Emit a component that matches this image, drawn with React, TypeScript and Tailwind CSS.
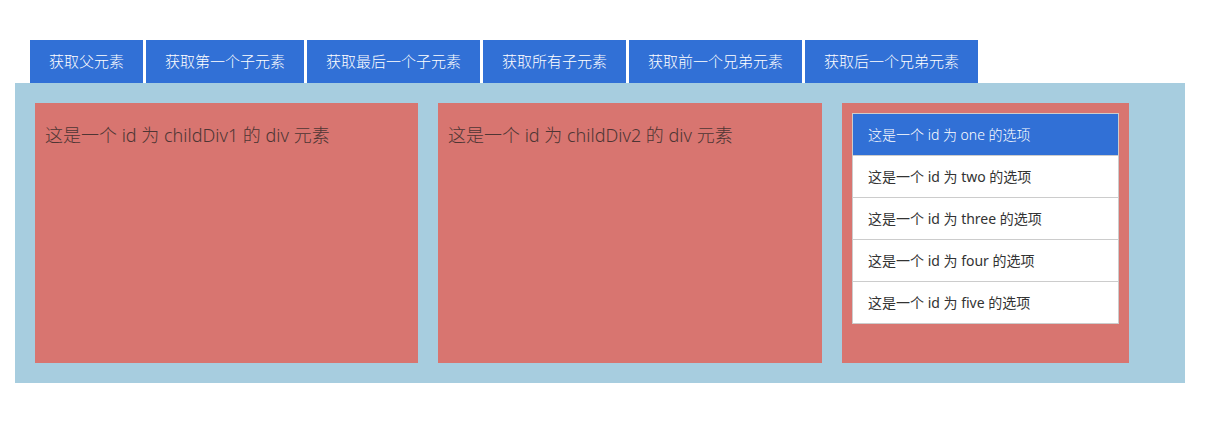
import React, { useState } from "react";

const buttons = [
  "获取父元素",
  "获取第一个子元素",
  "获取最后一个子元素",
  "获取所有子元素",
  "获取前一个兄弟元素",
  "获取后一个兄弟元素",
];

const options = ["one", "two", "three", "four", "five"];

const App = () => {
  const [active, setActive] = useState("one");

  return (
    <div
      className="w-[1205px] h-[421px] bg-white pt-10"
      style={{ fontFamily: '"Noto Sans", "Noto Sans CJK SC", sans-serif' }}
    >
      {/* toolbar */}
      <div className="flex gap-[3px] pl-[30px]">
        {buttons.map((b) => (
          <button
            key={b}
            className="h-[43px] px-[19px] bg-[#3170d6] text-white text-[15px] font-light leading-none"
          >
            {b}
          </button>
        ))}
      </div>

      {/* parent */}
      <div id="parentDiv" className="mx-[15px] w-[1170px] h-[300px] bg-[#a7cddf] p-5 flex gap-5">
        <div id="childDiv1" className="w-[383px] h-[260px] bg-[#d87570] p-[10px] pt-[19px]">
          <p className="text-[18px] leading-[26px] font-light text-[#4e3534]">
            这是一个 id 为 childDiv1 的 div 元素
          </p>
        </div>
        <div id="childDiv2" className="w-[384px] h-[260px] bg-[#d87570] p-[10px] pt-[19px]">
          <p className="text-[18px] leading-[26px] font-light text-[#4e3534]">
            这是一个 id 为 childDiv2 的 div 元素
          </p>
        </div>
        <div className="w-[287px] h-[260px] bg-[#d87570] p-[10px]">
          <ul className="w-[267px] border border-[#cccccc] bg-white">
            {options.map((o, i) => (
              <li
                key={o}
                id={o}
                onClick={() => setActive(o)}
                className={
                  (active === o ? "bg-[#3170d6] text-white font-light " : "bg-white text-[#333333] ") +
                  (i > 0 ? "border-t border-[#cccccc] h-[42px] " : "h-[41px] ") +
                  "flex items-center pl-[15px] text-[14px] cursor-pointer"
                }
              >
                这是一个 id 为 {o} 的选项
              </li>
            ))}
          </ul>
        </div>
      </div>
    </div>
  );
};

export default App;
